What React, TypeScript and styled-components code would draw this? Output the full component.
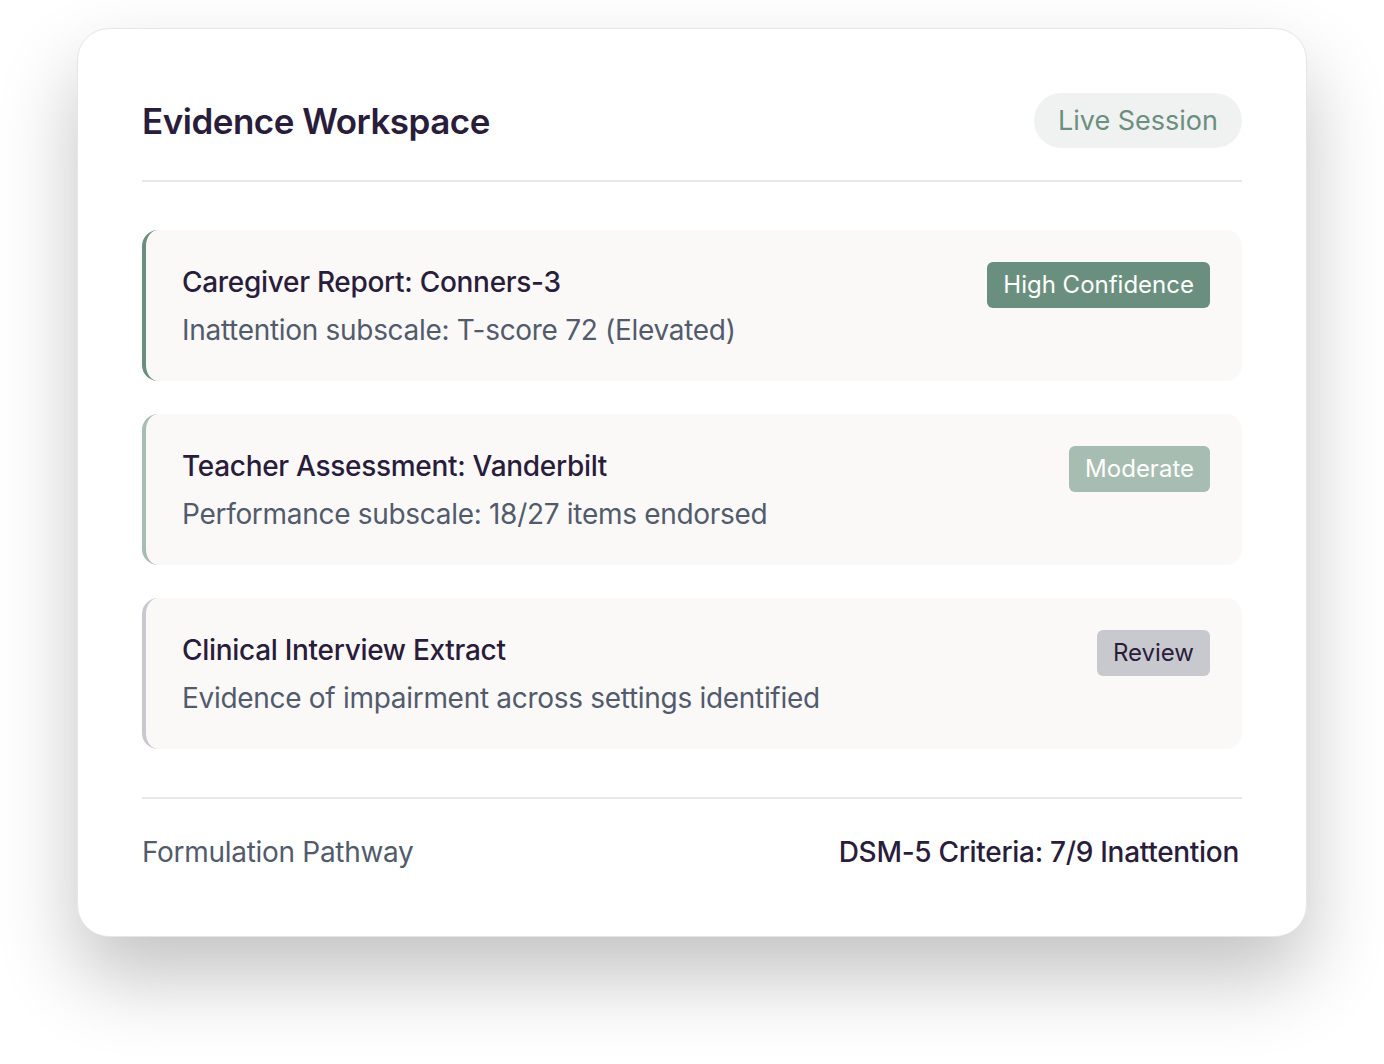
import React from "react";
import styled, { createGlobalStyle } from "styled-components";

type Level = "high" | "moderate" | "review";

interface EvidenceItem {
  title: string;
  detail: string;
  badge: string;
  level: Level;
}

const levels: Record<Level, { accent: string; badgeBg: string; badgeText: string }> = {
  high: { accent: "#6b8f7e", badgeBg: "#6b8f7e", badgeText: "#ffffff" },
  moderate: { accent: "#a8bdb2", badgeBg: "#a8bdb2", badgeText: "#ffffff" },
  review: { accent: "#c8c9ce", badgeBg: "#c8c9ce", badgeText: "#2a1d3b" },
};

const items: EvidenceItem[] = [
  {
    title: "Caregiver Report: Conners-3",
    detail: "Inattention subscale: T-score 72 (Elevated)",
    badge: "High Confidence",
    level: "high",
  },
  {
    title: "Teacher Assessment: Vanderbilt",
    detail: "Performance subscale: 18/27 items endorsed",
    badge: "Moderate",
    level: "moderate",
  },
  {
    title: "Clinical Interview Extract",
    detail: "Evidence of impairment across settings identified",
    badge: "Review",
    level: "review",
  },
];

const GlobalStyle = createGlobalStyle`
  body {
    margin: 0;
    background: #ffffff;
    font-family: Inter, "Noto Sans", sans-serif;
  }
`;

const Page = styled.div`
  padding: 28px 77px 120px;
`;

const Card = styled.section`
  box-sizing: border-box;
  width: 1230px;
  margin: 0 auto;
  padding: 64px;
  background: #ffffff;
  border: 1px solid #e6e6e6;
  border-radius: 32px;
  box-shadow: 0 40px 80px rgba(0, 0, 0, 0.24);
`;

const Header = styled.header`
  display: flex;
  justify-content: space-between;
  align-items: center;
  padding-bottom: 32px;
  border-bottom: 2px solid #e8e8e8;
`;

const Title = styled.h1`
  margin: 0;
  font-size: 35px;
  font-weight: 600;
  letter-spacing: -0.5px;
  color: #2a1d3b;
`;

const SessionPill = styled.span`
  padding: 12px 24px;
  border-radius: 999px;
  background: #f0f2f1;
  color: #6b8f7e;
  font-size: 27px;
  line-height: 31px;
`;

const List = styled.div`
  display: flex;
  flex-direction: column;
  gap: 33px;
  padding: 48px 0;
`;

const Item = styled.article<{ $accent: string }>`
  display: flex;
  justify-content: space-between;
  align-items: flex-start;
  padding: 32px 32px 31px 36px;
  background: #faf9f8;
  border-left: 4px solid ${(p) => p.$accent};
  border-radius: 16px;
`;

const ItemText = styled.div`
  display: flex;
  flex-direction: column;
  gap: 8px;
`;

const ItemTitle = styled.div`
  font-size: 28px;
  font-weight: 500;
  line-height: 40px;
  letter-spacing: -0.3px;
  color: #2a1d3b;
`;

const ItemDetail = styled.div`
  font-size: 28px;
  line-height: 40px;
  letter-spacing: -0.3px;
  color: #525b6c;
`;

const Badge = styled.span<{ $bg: string; $fg: string }>`
  padding: 6px 16px;
  border-radius: 6px;
  background: ${(p) => p.$bg};
  color: ${(p) => p.$fg};
  font-size: 24px;
  line-height: 34px;
  white-space: nowrap;
`;

const Footer = styled.footer`
  display: flex;
  justify-content: space-between;
  align-items: center;
  padding-top: 33px;
  border-top: 2px solid #e8e8e8;
  font-size: 28px;
  line-height: 40px;
  letter-spacing: -0.3px;
`;

const FooterLabel = styled.span`
  color: #525b6c;
`;

const FooterValue = styled.span`
  font-weight: 500;
  color: #2a1d3b;
  margin-right: 3px;
`;

export default function App() {
  return (
    <>
      <GlobalStyle />
      <Page>
        <Card>
          <Header>
            <Title>Evidence Workspace</Title>
            <SessionPill>Live Session</SessionPill>
          </Header>
          <List>
            {items.map((item) => {
              const lv = levels[item.level];
              return (
                <Item key={item.title} $accent={lv.accent}>
                  <ItemText>
                    <ItemTitle>{item.title}</ItemTitle>
                    <ItemDetail>{item.detail}</ItemDetail>
                  </ItemText>
                  <Badge $bg={lv.badgeBg} $fg={lv.badgeText}>
                    {item.badge}
                  </Badge>
                </Item>
              );
            })}
          </List>
          <Footer>
            <FooterLabel>Formulation Pathway</FooterLabel>
            <FooterValue>DSM-5 Criteria: 7/9 Inattention</FooterValue>
          </Footer>
        </Card>
      </Page>
    </>
  );
}
